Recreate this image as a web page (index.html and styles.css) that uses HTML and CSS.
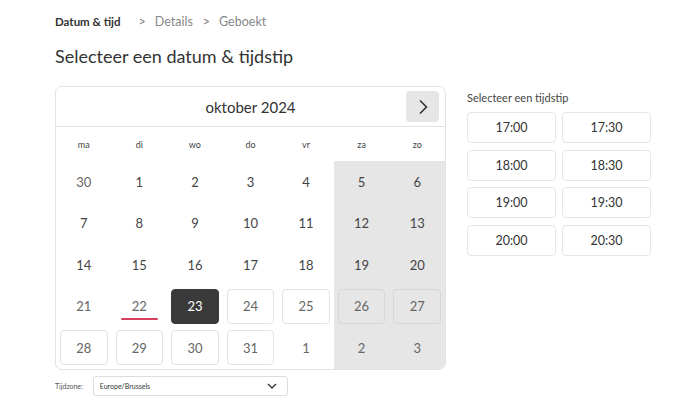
FILE: index.html
```html
<!DOCTYPE html>
<html lang="nl">
<head>
    <meta charset="UTF-8">
    <meta name="viewport" content="width=device-width, initial-scale=1.0">
    <title>Selecteer een datum &amp; tijdstip</title>
    <link rel="stylesheet" href="styles.css">
</head>
<body>
    <div class="page">
        <nav class="crumbs">
            <span class="crumb active">Datum &amp; tijd</span>
            <span class="sep">&gt;</span>
            <span class="crumb">Details</span>
            <span class="sep">&gt;</span>
            <span class="crumb">Geboekt</span>
        </nav>
        <h1>Selecteer een datum &amp; tijdstip</h1>

        <div class="main">
            <div class="left">
                <div class="calendar">
                    <div class="cal-head">
                        <span class="month">oktober 2024</span>
                        <button class="next">
                            <svg width="12" height="16" viewBox="0 0 12 16"><path d="M3 1.5 L9.5 8 L3 14.5" fill="none" stroke="#333" stroke-width="1.6"/></svg>
                        </button>
                    </div>
                    <div class="grid">
                        <div class="dow">ma</div>
                        <div class="dow">di</div>
                        <div class="dow">wo</div>
                        <div class="dow">do</div>
                        <div class="dow">vr</div>
                        <div class="dow">za</div>
                        <div class="dow">zo</div>

                        <div class="day other">30</div>
                        <div class="day">1</div>
                        <div class="day">2</div>
                        <div class="day">3</div>
                        <div class="day">4</div>
                        <div class="day we">5</div>
                        <div class="day we">6</div>

                        <div class="day">7</div>
                        <div class="day">8</div>
                        <div class="day">9</div>
                        <div class="day">10</div>
                        <div class="day">11</div>
                        <div class="day we">12</div>
                        <div class="day we">13</div>

                        <div class="day">14</div>
                        <div class="day">15</div>
                        <div class="day">16</div>
                        <div class="day">17</div>
                        <div class="day">18</div>
                        <div class="day we">19</div>
                        <div class="day we">20</div>

                        <div class="day soft">21</div>
                        <div class="day soft today"><span>22</span></div>
                        <div class="day"><span class="box selected">23</span></div>
                        <div class="day"><span class="box">24</span></div>
                        <div class="day"><span class="box">25</span></div>
                        <div class="day we"><span class="box">26</span></div>
                        <div class="day we"><span class="box">27</span></div>

                        <div class="day"><span class="box">28</span></div>
                        <div class="day"><span class="box">29</span></div>
                        <div class="day"><span class="box">30</span></div>
                        <div class="day"><span class="box">31</span></div>
                        <div class="day other">1</div>
                        <div class="day we other">2</div>
                        <div class="day we other">3</div>
                    </div>
                </div>
                <div class="tz">
                    <span class="tz-label">Tijdzone:</span>
                    <div class="tz-select">
                        <span>Europe/Brussels</span>
                        <svg width="10" height="6" viewBox="0 0 10 6"><path d="M1 1 L5 5 L9 1" fill="none" stroke="#333" stroke-width="1.3"/></svg>
                    </div>
                </div>
            </div>

            <div class="right">
                <div class="slots-title">Selecteer een tijdstip</div>
                <div class="slots">
                    <button class="slot">17:00</button>
                    <button class="slot">17:30</button>
                    <button class="slot">18:00</button>
                    <button class="slot">18:30</button>
                    <button class="slot">19:00</button>
                    <button class="slot">19:30</button>
                    <button class="slot">20:00</button>
                    <button class="slot">20:30</button>
                </div>
            </div>
        </div>
    </div>
</body>
</html>
```

FILE: styles.css
```css
body {
    margin: 0;
    font-family: Lato, "Noto Sans", sans-serif;
    color: #333;
    background: #fff;
}
.page {
    padding: 12px 0 0 55px;
}
.crumbs {
    display: flex;
    align-items: center;
    font-size: 12.5px;
    color: #888;
    height: 18px;
}
.crumb.active {
    color: #333;
    font-weight: bold;
    font-size: 11.5px;
    margin-right: 8px;
}
.sep {
    margin: 0 9px 0 10px;
    color: #777;
}
h1 {
    font-size: 18px;
    font-weight: normal;
    color: #333;
    margin: 15px 0 19px 0;
    line-height: 22px;
}
.main {
    display: flex;
    gap: 21px;
}
.left {
    width: 391px;
}
.calendar {
    border: 1px solid #e3e3e3;
    border-radius: 7px;
    overflow: hidden;
}
.cal-head {
    position: relative;
    height: 39px;
    border-bottom: 1px solid #e3e3e3;
    display: flex;
    align-items: center;
    justify-content: center;
}
.month {
    font-size: 15px;
    color: #333;
}
.next {
    position: absolute;
    right: 6px;
    top: 4px;
    width: 33px;
    height: 31px;
    border: none;
    border-radius: 4px;
    background: #e6e6e6;
    display: flex;
    align-items: center;
    justify-content: center;
    padding: 0;
}
.grid {
    display: grid;
    grid-template-columns: repeat(7, 1fr);
    grid-auto-rows: 41.5px;
    grid-template-rows: 34px;
}
.dow {
    font-size: 9px;
    color: #444;
    display: flex;
    align-items: center;
    justify-content: center;
}
.day {
    display: flex;
    align-items: center;
    justify-content: center;
    font-size: 13px;
    color: #444;
    position: relative;
}
.day.we {
    background: #e6e6e6;
}
.day.other, .day.soft {
    color: #666;
}
.day.today span::after {
    content: "";
    position: absolute;
    left: 9px;
    right: 9px;
    bottom: 7px;
    height: 2px;
    background: #d6405c;
    border-radius: 1px;
}
.box {
    display: flex;
    align-items: center;
    justify-content: center;
    width: calc(100% - 8px);
    height: 35px;
    border: 1px solid #e3e3e3;
    border-radius: 4px;
    box-sizing: border-box;
    color: #666;
}
.day.we .box {
    border-color: #d6d6d6;
}
.box.selected {
    background: #3a3a3a;
    border-color: #3a3a3a;
    color: #fff;
}
.tz {
    display: flex;
    align-items: center;
    margin-top: 6px;
    gap: 10px;
}
.tz-label {
    font-size: 7px;
    color: #555;
}
.tz-select {
    width: 195px;
    height: 20px;
    box-sizing: border-box;
    border: 1px solid #ddd;
    border-radius: 3px;
    display: flex;
    align-items: center;
    justify-content: space-between;
    padding: 0 10px 0 6px;
    font-size: 7px;
    color: #333;
}
.right {
    width: 184px;
    padding-top: 5px;
}
.slots-title {
    font-size: 11px;
    color: #444;
    margin-bottom: 8px;
}
.slots {
    display: grid;
    grid-template-columns: 1fr 1fr;
    gap: 6.5px 6px;
}
.slot {
    height: 31px;
    border: 1px solid #e6e6e6;
    border-radius: 4px;
    background: #fff;
    font-family: Lato, "Noto Sans", sans-serif;
    font-size: 12.5px;
    color: #333;
}
```
